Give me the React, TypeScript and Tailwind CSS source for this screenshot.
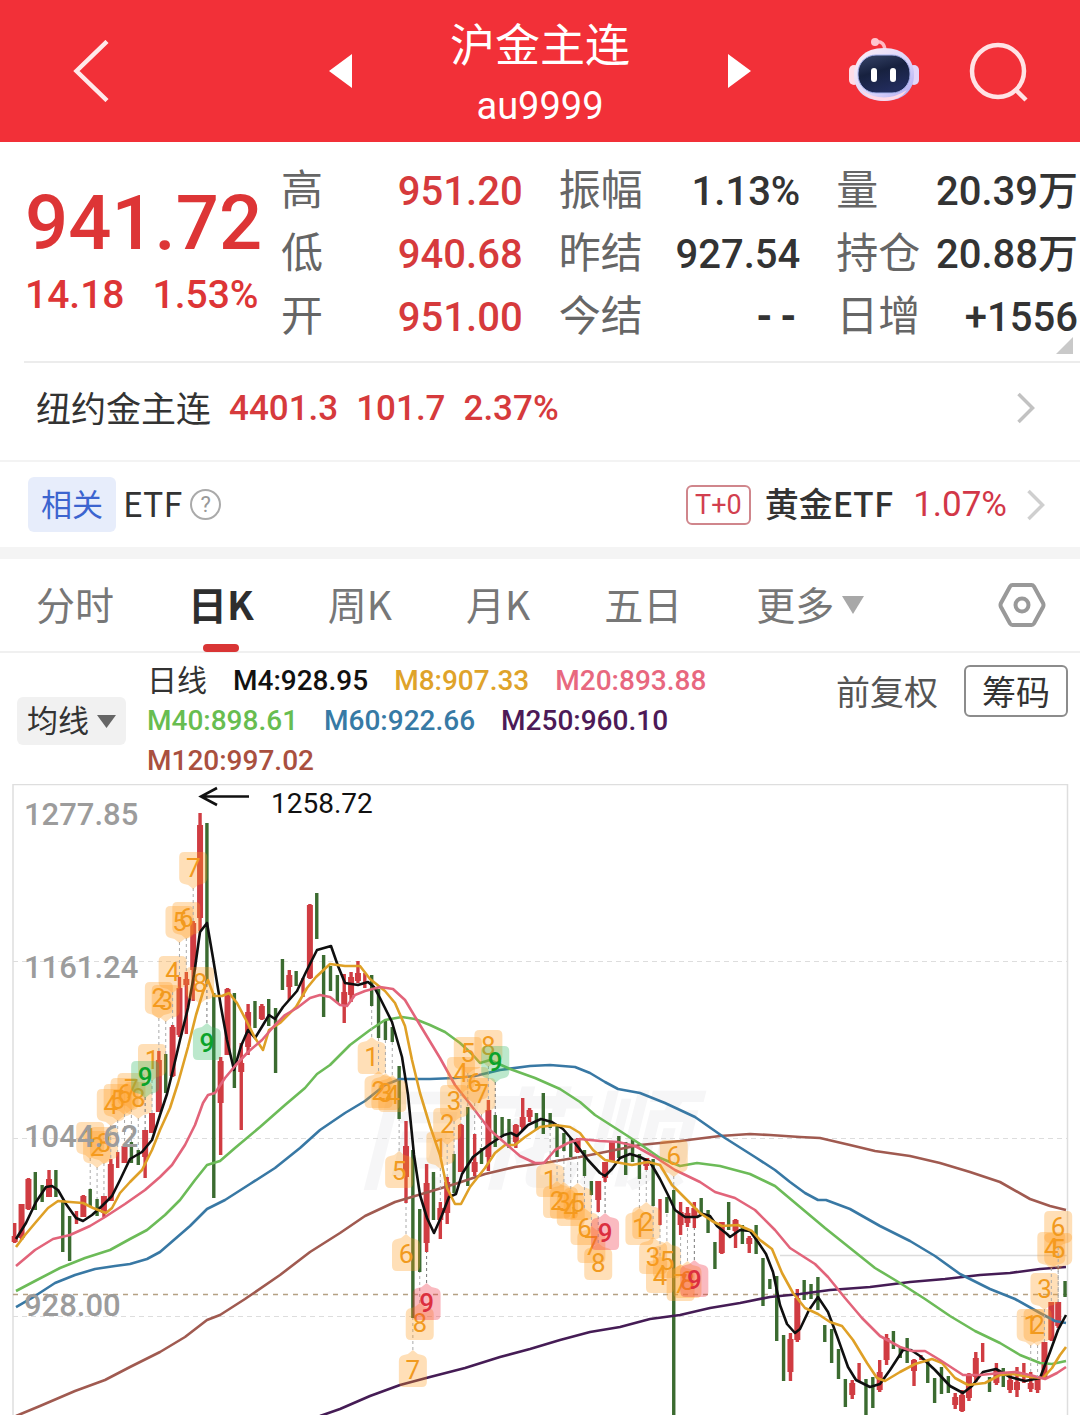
import React from "react";

const NUM = "font-['Roboto','Noto_Sans_CJK_SC',sans-serif]";

type Stat = { label: string; value: string; red?: boolean };

const stats: Stat[][] = [
  [
    { label: "高", value: "951.20", red: true },
    { label: "低", value: "940.68", red: true },
    { label: "开", value: "951.00", red: true },
  ],
  [
    { label: "振幅", value: "1.13%" },
    { label: "昨结", value: "927.54" },
    { label: "今结", value: "--" },
  ],
  [
    { label: "量", value: "20.39万" },
    { label: "持仓", value: "20.88万" },
    { label: "日增", value: "+1556" },
  ],
];

const averages = [
  { text: "日线", cls: "text-[30px] font-normal text-[#333]" },
  { text: "M4:928.95", cls: "text-[28px] font-medium text-[#111]" },
  { text: "M8:907.33", cls: "text-[28px] font-medium text-[#dfa32a]" },
  { text: "M20:893.88", cls: "text-[28px] font-medium text-[#e8687f]" },
  { text: "M40:898.61", cls: "text-[28px] font-medium text-[#68bd50]" },
  { text: "M60:922.66", cls: "text-[28px] font-medium text-[#377aa5]" },
  { text: "M250:960.10", cls: "text-[28px] font-medium text-[#4d1a57]" },
  { text: "M120:997.02", cls: "text-[28px] font-medium text-[#a9503f]" },
];

// [direction, high, low, body top, body bottom] in chart units; falling days are drawn as a thin bar.
type Candle = ["r" | "g", number, number, number?, number?];

const candles: Candle[] = [
  ["r", 1223, 1243, 1236, 1242], ["r", 1204, 1240, 1204, 1238], ["r", 1178, 1210, 1179, 1209], ["g", 1172, 1210], ["g", 1185, 1202],
  ["r", 1170, 1197, 1179, 1197], ["g", 1170, 1197], ["g", 1200, 1252], ["g", 1216, 1261], ["r", 1211, 1224],
  ["r", 1195, 1217, 1196, 1217], ["g", 1189, 1207], ["g", 1199, 1216], ["r", 1196, 1217, 1196, 1213], ["r", 1159, 1201, 1164, 1201],
  ["r", 1152, 1168], ["r", 1146, 1163, 1146, 1163], ["g", 1142, 1163], ["g", 1150, 1165], ["r", 1130, 1178, 1130, 1157],
  ["r", 1113, 1133, 1113, 1133], ["r", 1051, 1112, 1060, 1112], ["g", 1054, 1093], ["r", 1025, 1077, 1027, 1076], ["r", 977, 1037, 988, 1035],
  ["r", 972, 1034, 979, 985], ["r", 921, 1001, 923, 970], ["r", 813, 931, 825, 918], ["g", 823, 983], ["g", 993, 1198],
  ["r", 1057, 1155, 1061, 1103], ["r", 988, 1055, 989, 1055], ["g", 993, 1088], ["r", 1043, 1130, 1063, 1072], ["r", 1004, 1055, 1012, 1047],
  ["g", 1001, 1028], ["r", 1004, 1020, 1006, 1019], ["g", 999, 1026], ["g", 1008, 1073], ["g", 959, 990],
  ["r", 970, 1000, 975, 987], ["g", 971, 986], ["r", 978, 997], ["r", 904, 979, 905, 978], ["g", 893, 939],
  ["g", 955, 1017], ["g", 966, 991], ["g", 975, 1003], ["r", 974, 1023, 992, 1005], ["r", 972, 1002, 977, 995],
  ["r", 961, 983, 973, 981], ["r", 973, 988], ["g", 975, 1006], ["g", 989, 1038], ["g", 1020, 1040],
  ["g", 1027, 1042], ["g", 1066, 1119], ["r", 1121, 1203, 1146, 1177], ["g", 1150, 1318], ["g", 1209, 1272],
  ["r", 1164, 1252, 1183, 1243], ["g", 1172, 1220], ["r", 1202, 1239, 1208, 1220], ["r", 1177, 1224, 1182, 1213], ["g", 1154, 1193],
  ["r", 1124, 1172, 1125, 1172], ["g", 1107, 1186], ["r", 1134, 1176, 1162, 1172], ["g", 1148, 1164], ["r", 1100, 1171, 1110, 1157],
  ["g", 1115, 1147], ["g", 1117, 1137], ["g", 1119, 1148], ["r", 1124, 1148, 1125, 1142], ["r", 1098, 1130, 1117, 1127],
  ["r", 1108, 1122, 1110, 1117], ["g", 1113, 1130], ["g", 1093, 1134], ["g", 1113, 1128], ["g", 1124, 1157],
  ["g", 1133, 1151], ["g", 1138, 1157], ["r", 1138, 1153, 1139, 1152], ["g", 1150, 1176], ["g", 1181, 1195],
  ["r", 1181, 1212, 1181, 1200], ["r", 1162, 1182, 1162, 1178], ["r", 1142, 1162, 1142, 1161], ["g", 1136, 1158], ["g", 1142, 1175],
  ["g", 1139, 1162], ["g", 1154, 1179], ["r", 1158, 1170, 1158, 1166], ["g", 1159, 1206], ["r", 1199, 1225],
  ["g", 1197, 1213], ["g", 1190, 1416], ["r", 1202, 1235, 1212, 1225], ["r", 1207, 1227, 1213, 1223], ["r", 1202, 1228, 1208, 1218],
  ["g", 1198, 1215], ["g", 1210, 1233], ["g", 1242, 1269], ["r", 1222, 1254, 1222, 1253], ["g", 1202, 1230],
  ["r", 1219, 1248, 1220, 1231], ["g", 1225, 1244], ["r", 1236, 1253, 1238, 1244], ["g", 1225, 1254], ["g", 1258, 1306],
  ["g", 1279, 1289], ["g", 1276, 1341], ["g", 1335, 1381], ["r", 1333, 1381, 1339, 1372], ["r", 1289, 1342, 1298, 1340],
  ["g", 1280, 1300], ["g", 1284, 1299], ["g", 1277, 1310], ["g", 1325, 1342], ["g", 1329, 1363],
  ["g", 1349, 1379], ["g", 1379, 1407], ["r", 1380, 1399, 1383, 1395], ["r", 1363, 1382], ["g", 1379, 1416],
  ["g", 1377, 1408], ["r", 1360, 1392, 1372, 1390], ["r", 1334, 1365, 1338, 1360], ["g", 1331, 1349], ["g", 1347, 1358],
  ["g", 1338, 1363], ["r", 1359, 1386, 1360, 1371], ["r", 1355, 1360], ["g", 1360, 1383], ["g", 1378, 1403],
  ["g", 1367, 1394], ["g", 1376, 1393], ["r", 1393, 1409, 1397, 1405], ["r", 1390, 1412, 1395, 1411], ["r", 1373, 1401, 1374, 1398],
  ["r", 1352, 1382, 1358, 1377], ["r", 1343, 1362], ["g", 1377, 1392], ["r", 1363, 1385, 1370, 1383], ["g", 1368, 1387],
  ["r", 1375, 1393, 1380, 1390], ["r", 1367, 1397, 1382, 1390], ["r", 1363, 1383], ["r", 1372, 1392, 1383, 1389], ["r", 1377, 1393, 1378, 1390],
  ["r", 1342, 1379, 1342, 1378], ["r", 1302, 1341, 1302, 1340], ["r", 1302, 1328, 1302, 1326], ["g", 1281, 1297],
];

const candleX = (i: number) => 14.7 + 6.865 * i;

const lines = [
  {
    color: "#a05a50",
    points:
      "16,1416 40,1406 75,1391 105,1380 130,1367 160,1352 185,1337 207,1320 220,1315 245,1299 280,1275 310,1252 340,1233 365,1216 395,1202 425,1193 455,1184 485,1174 515,1167 550,1162 580,1157 610,1151 640,1145 680,1141 720,1136 750,1134 770,1135 800,1137 820,1138 850,1145 875,1151 910,1156 940,1163 970,1172 1000,1182 1030,1199 1050,1206 1066,1210",
  },
  {
    color: "#451c55",
    points:
      "320,1416 340,1409 370,1396 400,1385 430,1377 465,1368 500,1357 530,1349 560,1340 590,1332 620,1327 650,1319 680,1315 710,1308 740,1303 770,1297 800,1294 830,1290 870,1287 910,1282 945,1279 980,1275 1010,1273 1040,1269 1066,1267",
  },
  {
    color: "#3878a4",
    points:
      "16,1307 35,1296 55,1283 75,1275 95,1269 115,1266 130,1264 147,1259 160,1252 175,1239 190,1226 207,1209 225,1200 250,1184 275,1168 300,1148 320,1130 345,1113 365,1101 385,1085 400,1079 430,1079 455,1078 475,1076 500,1070 530,1066 550,1065 575,1067 590,1073 605,1082 618,1089 640,1093 665,1103 695,1117 725,1138 755,1157 775,1170 790,1182 805,1193 818,1200 826,1200 850,1209 880,1226 910,1241 935,1256 960,1274 990,1289 1015,1299 1040,1313 1055,1321 1066,1323",
  },
  {
    color: "#6cbb58",
    points:
      "16,1291 35,1281 60,1268 85,1258 110,1250 130,1239 147,1230 165,1215 180,1200 195,1180 207,1165 220,1161 235,1148 260,1127 285,1105 305,1088 317,1074 330,1065 350,1045 370,1030 385,1020 402,1017 415,1019 430,1025 445,1032 460,1043 472,1054 480,1063 490,1060 510,1069 535,1078 560,1089 580,1102 595,1115 620,1131 640,1144 660,1158 680,1166 697,1163 720,1166 750,1174 775,1186 800,1207 825,1228 850,1248 875,1268 900,1283 925,1299 950,1316 975,1331 1000,1343 1020,1355 1040,1363 1052,1364 1066,1361",
  },
  {
    color: "#0f0f0f",
    points:
      "16,1239 26,1223 36,1202 46,1187 52,1186 58,1190 66,1204 76,1218 83,1221 92,1215 102,1206 112,1196 120,1180 130,1159 142,1152 152,1140 160,1115 167,1094 173,1070 180,1040 188,1008 194,975 200,932 207,923 213,958 221,1007 227,1040 234,1070 241,1046 248,1030 255,1038 263,1025 269,1015 275,1019 283,1007 297,991 306,972 317,950 331,946 338,966 345,983 358,985 368,982 374,987 380,998 392,1022 402,1057 408,1095 414,1155 420,1195 427,1218 434,1233 442,1215 449,1197 456,1194 462,1174 473,1157 490,1144 504,1135 511,1133 517,1136 528,1125 541,1119 552,1122 563,1129 575,1143 588,1160 600,1173 605,1176 612,1169 620,1158 630,1154 640,1157 650,1162 660,1179 668,1195 675,1210 685,1217 697,1217 703,1214 710,1216 717,1226 727,1234 730,1237 740,1230 750,1231 758,1242 766,1254 773,1272 780,1305 787,1324 795,1333 800,1329 809,1310 818,1297 828,1312 837,1336 848,1367 856,1380 870,1387 880,1384 890,1370 903,1350 911,1350 920,1356 935,1370 950,1386 963,1393 972,1386 983,1372 996,1369 1010,1377 1025,1381 1040,1378 1050,1352 1058,1330 1066,1315",
  },
  {
    color: "#dfa026",
    points:
      "16,1247 25,1235 36,1222 48,1208 58,1201 70,1202 83,1203 93,1208 106,1213 112,1208 120,1193 130,1182 142,1170 152,1150 160,1130 170,1108 178,1083 188,1047 196,1015 203,992 208,980 214,996 222,996 229,993 237,1003 246,1020 255,1038 263,1050 269,1030 280,1023 296,1007 307,988 316,977 330,964 345,966 360,966 370,979 385,991 395,1003 405,1026 412,1060 420,1093 430,1126 440,1155 447,1188 455,1204 461,1204 470,1187 485,1168 495,1153 505,1145 515,1145 525,1137 540,1127 555,1125 570,1127 580,1133 593,1150 605,1160 615,1162 632,1165 648,1162 660,1165 672,1185 690,1203 700,1213 712,1221 722,1226 738,1225 752,1231 760,1240 772,1249 782,1273 793,1293 805,1308 818,1314 830,1322 842,1326 853,1340 867,1363 877,1378 885,1381 900,1372 915,1364 932,1359 942,1363 955,1378 968,1385 985,1383 1000,1375 1012,1374 1030,1377 1043,1378 1052,1368 1060,1355 1066,1347",
  },
  {
    color: "#e2647a",
    points:
      "16,1266 35,1250 53,1239 70,1235 90,1226 105,1217 125,1204 145,1190 160,1177 172,1165 185,1145 195,1125 203,1103 208,1095 215,1093 225,1078 235,1066 248,1052 262,1040 275,1025 285,1015 297,1008 310,998 320,995 330,997 340,1005 347,1006 355,995 365,991 380,987 393,989 405,1000 420,1025 440,1058 455,1085 470,1104 490,1130 505,1143 520,1156 535,1163 544,1163 555,1150 568,1143 580,1139 600,1141 618,1142 635,1146 655,1157 675,1170 700,1182 715,1192 735,1198 755,1210 775,1230 790,1248 815,1264 828,1277 845,1298 862,1318 880,1336 900,1347 912,1351 925,1351 940,1360 963,1375 980,1375 1000,1373 1015,1372 1030,1375 1045,1379 1057,1373 1066,1367",
  },
];

// [candle index, digit, vertical centre, side of the candle, tone]
type Mark = [number, string, number, "above" | "below", ("green" | "red")?];

const marks: Mark[] = [
  [11, "1", 1138, "above"], [12, "2", 1147, "above"], [13, "3", 1143, "above"],
  [14, "4", 1105, "above"], [15, "5", 1100, "above"], [16, "6", 1094, "above"], [17, "7", 1089, "above"], [18, "8", 1098, "above"],
  [20, "1", 1060, "above"], [19, "9", 1077, "above", "green"],
  [21, "2", 998, "above"], [22, "3", 1001, "above"], [23, "4", 972, "above"], [24, "5", 922, "above"], [25, "6", 918, "above"],
  [26, "7", 868, "above"], [27, "8", 983, "above"], [28, "9", 1043, "below", "green"],
  [52, "1", 1057, "below"], [53, "2", 1091, "below"], [54, "3", 1093, "below"], [55, "4", 1095, "below"],
  [56, "5", 1171, "below"], [57, "6", 1254, "below"], [58, "7", 1370, "below"], [59, "8", 1323, "below"], [60, "9", 1303, "below", "red"],
  [62, "1", 1148, "above"], [63, "2", 1124, "above"], [64, "3", 1101, "above"], [65, "4", 1073, "above"], [66, "5", 1053, "above"],
  [67, "6", 1083, "above"], [68, "7", 1094, "above"], [69, "8", 1046, "above"], [70, "9", 1062, "above", "green"],
  [78, "1", 1180, "below"], [79, "2", 1201, "below"], [80, "3", 1202, "below"], [81, "4", 1209, "below"], [82, "5", 1203, "below"],
  [83, "6", 1228, "below"], [84, "7", 1246, "below"], [85, "8", 1263, "below"], [86, "9", 1233, "below", "red"],
  [91, "1", 1228, "below"], [92, "2", 1222, "below"], [93, "3", 1257, "below"], [94, "4", 1276, "below"], [95, "5", 1261, "below"],
  [96, "6", 1156, "above"], [97, "7", 1284, "below"], [98, "8", 1281, "below"], [99, "9", 1280, "below", "red"],
  [148, "1", 1325, "above"], [149, "2", 1325, "above"], [150, "3", 1289, "above"], [151, "4", 1248, "above"], [152, "5", 1249, "above"],
  [152, "6", 1227, "above"],
];

const tones = {
  orange: { box: "#ff9d1e", ink: "#f19a1e" },
  green: { box: "#2fb861", ink: "#0ba32a" },
  red: { box: "#f0283c", ink: "#dc2f3f" },
};

function MarkBox({ mark }: { mark: Mark }) {
  const [i, digit, y, side, toneName] = mark;
  const x = candleX(i);
  const tone = tones[toneName ?? "orange"];
  const above = side === "above";
  const edge = above ? candles[i][1] : candles[i][2];
  const tip = above ? y + 20 : y - 20;
  const connected = above ? edge > tip : edge < tip;
  const shape = above
    ? "M-9 -16h18q5 0 5 5v21q0 5 -5 6l-4 1l-5 4l-5 -4l-4 -1q-5 -1 -5 -6v-21q0 -5 5 -5z"
    : "M-9 17h18q5 0 5 -5v-21q0 -5 -5 -6l-4 -1l-5 -4l-5 4l-4 1q-5 1 -5 6v21q0 5 5 5z";
  return (
    <g>
      {connected && (
        <line x1={x} x2={x} y1={tip} y2={edge} stroke={toneName ? "#777" : "#aaa"} strokeWidth="1" strokeDasharray="3 3" />
      )}
      <g transform={`translate(${x} ${y})`}>
        <path d={shape} fill={tone.box} fillOpacity="0.32" />
        <text x="0" y="9" textAnchor="middle" fontSize="26" fill={tone.ink} fontWeight={toneName ? 500 : 400}>
          {digit}
        </text>
      </g>
    </g>
  );
}

function Chart() {
  return (
    <svg viewBox="0 784 1080 631" className={`block w-full ${NUM}`} role="img" aria-label="日K线图">
      <text x="358" y="1180" fontSize="110" fontWeight="700" fontStyle="italic" fill="#f6f6f7" fontFamily="Noto Sans CJK SC">
        同花顺
      </text>
      <g fill="none">
        <path d="M13 1415V784.5H1067.500V1415" stroke="#dedede" strokeWidth="1.500" />
        <path d="M13 961.500H1067M13 1138.500H1067M13 1316.500H1067" stroke="#dddddd" strokeDasharray="5 4" />
        <path d="M780 1255.500H1067" stroke="#dcdcdc" strokeWidth="1.500" />
        <path d="M13 1294.500H1067" stroke="#b5a184" strokeWidth="1.500" strokeDasharray="5 5" />
      </g>
      {candles.map(([dir, high, low, top, bottom], i) => {
        const x = candleX(i);
        const fill = dir === "r" ? "#d03c42" : "#3b6b30";
        return (
          <g key={i} fill={fill}>
            <rect x={x - 1.7} y={high} width="3.4" height={low - high} />
            {top !== undefined && bottom !== undefined && <rect x={x - 3} y={top} width="6" height={bottom - top} />}
          </g>
        );
      })}
      {lines.map((line) => (
        <polyline key={line.color} points={line.points} fill="none" stroke={line.color} strokeWidth="2.600" strokeLinejoin="round" />
      ))}
      {marks.map((mark, k) => (
        <MarkBox key={k} mark={mark} />
      ))}
      <g fontSize="31" fontWeight="500" fill="#9c9c9c">
        <text x="24" y="825">1277.85</text>
        <text x="24" y="978">1161.24</text>
        <text x="24" y="1147">1044.62</text>
        <text x="24" y="1316">928.00</text>
      </g>
      <path d="M249 796.500H202M217 788L201 796.500L217 805" fill="none" stroke="#111" strokeWidth="2.600" />
      <text x="271" y="813" fontSize="28" fill="#111">1258.72</text>
    </svg>
  );
}

function Robot() {
  return (
    <svg viewBox="0 0 72 66" className="h-[66px] w-[72px]" aria-hidden="true">
      <defs>
        <linearGradient id="shell" x1="0" y1="0" x2="1" y2="1">
          <stop offset="0" stopColor="#fff0f6" />
          <stop offset="0.6" stopColor="#d9d3fa" />
          <stop offset="1" stopColor="#a9a5f0" />
        </linearGradient>
        <linearGradient id="visor" x1="0" y1="0" x2="0.4" y2="1">
          <stop offset="0" stopColor="#39466b" />
          <stop offset="0.5" stopColor="#17213f" />
          <stop offset="1" stopColor="#222c5c" />
        </linearGradient>
      </defs>
      <path d="M27 4q10-2 10 10" fill="none" stroke="#ffb9c4" strokeWidth="3.500" />
      <circle cx="27" cy="4" r="4" fill="#ffc6cf" />
      <rect x="1" y="27" width="10" height="20" rx="5" fill="#ffdce6" />
      <rect x="61" y="27" width="10" height="20" rx="5" fill="#e2d6fa" />
      <path d="M36 10C56 10 66 22 66 37C66 54 53 63 36 63C19 63 6 54 6 37C6 22 16 10 36 10z" fill="url(#shell)" />
      <path d="M13 52q23 15 46 0q-7 11 -23 11t-23 -11z" fill="#ffd9e6" />
      <rect x="10" y="17" width="52" height="38" rx="18" fill="url(#visor)" stroke="#a9b4ee" strokeWidth="1" />
      <rect x="23" y="30" width="6" height="14" rx="3" fill="#fff" />
      <rect x="42" y="30" width="6" height="14" rx="3" fill="#fff" />
    </svg>
  );
}

function Chevron({ className }: { className: string }) {
  return (
    <svg viewBox="0 0 18 32" className={`h-8 w-[18px] ${className}`} fill="none" stroke="currentColor" aria-hidden="true">
      <path d="M1.500 2L15.500 16L1.500 30" strokeWidth="3.500" />
    </svg>
  );
}

export default function App() {
  return (
    <div className="min-h-screen overflow-hidden bg-white font-['Noto_Sans_CJK_SC',sans-serif] text-[#333]">
      <header className="grid h-[142px] grid-cols-[1fr_422px_1fr] items-center bg-[#f23038] text-white">
        <div className="pl-[73px]">
          <button aria-label="返回" className="block">
            <svg viewBox="0 0 36 62" className="h-[62px] w-9" fill="none" stroke="#ffe9ea" strokeWidth="4.500" aria-hidden="true">
              <path d="M34 1.500L3.500 31L34 60.500" />
            </svg>
          </button>
        </div>
        <div className="flex items-center justify-between">
          <button aria-label="上一个">
            <svg viewBox="0 0 23 34" className="h-[34px] w-[23px]" fill="#fff" aria-hidden="true">
              <path d="M23 0V34L0 17z" />
            </svg>
          </button>
          <div className="flex flex-col items-center pt-2">
            <h1 className="text-[45px] leading-[62px] font-normal">沪金主连</h1>
            <p className={`text-[38px] leading-[64px] ${NUM}`}>au9999</p>
          </div>
          <button aria-label="下一个">
            <svg viewBox="0 0 23 34" className="h-[34px] w-[23px]" fill="#fff" aria-hidden="true">
              <path d="M0 0V34L23 17z" />
            </svg>
          </button>
        </div>
        <div className="flex items-center justify-end gap-12 pr-[50px]">
          <button aria-label="智能助手">
            <Robot />
          </button>
          <button aria-label="搜索">
            <svg viewBox="0 0 62 62" className="h-[62px] w-[62px]" fill="none" stroke="#ffe3e5" strokeWidth="4.500" aria-hidden="true">
              <circle cx="30" cy="31" r="26" />
              <path d="M47 49L58 60" />
            </svg>
          </button>
        </div>
      </header>

      <section className="relative flex h-[219px] pt-[18px]">
        <div className={`w-[281px] shrink-0 pl-[25px] font-medium text-[#dd3536] ${NUM}`}>
          <p className="pt-[18px] text-[76px] leading-[90px]">941.72</p>
          <p className="flex gap-7 text-[39px] leading-[54px]">
            <span>14.18</span>
            <span>1.53%</span>
          </p>
        </div>
        <div className="grid flex-1 grid-cols-3 gap-9 pr-0.5">
          {stats.map((column, c) => (
            <dl key={c}>
              {column.map((s) => (
                <div key={s.label} className="flex h-[63px] items-center justify-between whitespace-nowrap">
                  <dt className="pb-[10px] text-[42px] leading-none text-[#666]">{s.label}</dt>
                  <dd
                    className={`text-[40px] leading-[63px] ${s.red ? "text-[#d63a3c]" : "text-[#333]"} ${
                      s.value === "--" ? "font-['Liberation_Mono',monospace] font-bold" : `font-medium ${NUM}`
                    }`}
                  >
                    {s.value}
                  </dd>
                </div>
              ))}
            </dl>
          ))}
        </div>
        <svg viewBox="0 0 17 17" className="absolute right-[7px] bottom-[7px] h-[17px] w-[17px]" fill="#c9c9c9" aria-hidden="true">
          <path d="M17 0V17H0z" />
        </svg>
      </section>

      <a href="#comex" className="ml-6 flex h-[99px] items-center border-t-2 border-[#ececec] pr-[45px] pb-[7px] pl-3">
        <span className="pb-[3px] text-[35px] leading-none">纽约金主连</span>
        <span className={`ml-[18px] flex flex-1 gap-[18px] text-[35px] leading-none font-medium text-[#d63a3c] ${NUM}`}>
          <span>4401.3</span>
          <span>101.7</span>
          <span>2.37%</span>
        </span>
        <Chevron className="text-[#c2c2c2]" />
      </a>

      <section className="flex h-[87px] items-center justify-between border-t-2 border-[#f3f3f3] pr-[35px] pl-7">
        <div className="flex items-center">
          <span className="rounded-md bg-[#e7edfb] px-[13px] pb-1 text-[31px] leading-[51px] text-[#3c64cf]">相关</span>
          <span className="ml-[7px] pb-1 text-[34px] leading-none">ETF</span>
          <button
            aria-label="说明"
            className={`ml-2 flex h-[31px] w-[31px] items-center justify-center rounded-full border-2 border-[#aaa] text-[22px] leading-none text-[#999] ${NUM}`}
          >
            ?
          </button>
        </div>
        <a href="#etf" className="flex items-center">
          <span className={`rounded-md border-2 border-[#d0868c] px-[7px] text-[27px] leading-9 text-[#d23f4f] ${NUM}`}>T+0</span>
          <span className="ml-[14px] pb-1 text-[34px] leading-none font-medium">黄金ETF</span>
          <span className={`mr-5 ml-5 text-[35px] leading-none text-[#d23748] ${NUM}`}>1.07%</span>
          <Chevron className="text-[#cfcfcf]" />
        </a>
      </section>

      <div className="h-3 bg-[#f4f4f4]" />

      <nav className="flex h-[94px] items-center justify-between border-b-2 border-[#f0f0f0] pr-[34px] pl-9 text-[39px] text-[#777]">
        <div className="flex h-full items-center gap-[74px]">
          <button className="pb-1">分时</button>
          <button aria-current="page" className="relative pb-1 font-bold text-[#2e2e2e]">
            日K
            <span className="absolute -bottom-4 left-1/2 h-2 w-9 -translate-x-1/2 rounded-full bg-[#d93535]" />
          </button>
          <button className="pb-1">周K</button>
          <button className="pb-1">月K</button>
          <button className="pb-1">五日</button>
          <button className="flex items-center gap-2">
            <span className="pb-1">更多</span>
            <svg viewBox="0 0 22 18" className="h-[18px] w-[22px]" fill="#a8a8a8" aria-hidden="true">
              <path d="M0 0H22L11 18z" />
            </svg>
          </button>
        </div>
        <button aria-label="设置">
          <svg viewBox="0 0 48 46" className="h-[46px] w-12" fill="none" stroke="#999" strokeWidth="4" aria-hidden="true">
            <path d="M14.500 3H33.500Q35 3 36 4.500L45 21Q46 23 45 25L36 41.500Q35 43 33.500 43H14.500Q13 43 12 41.500L3 25Q2 23 3 21L12 4.500Q13 3 14.500 3z" />
            <circle cx="24" cy="23" r="6.500" />
          </svg>
        </button>
      </nav>

      <section className="flex min-h-[131px] items-start pt-2 pr-3 pl-[17px]">
        <button className="mt-9 flex h-12 shrink-0 items-center gap-2 rounded-md bg-[#f1f1f1] px-[10px] text-[31px] leading-none">
          <span className="pb-[5px]">均线</span>
          <svg viewBox="0 0 19 13" className="h-[13px] w-[19px]" fill="#666" aria-hidden="true">
            <path d="M0 0H19L9.500 13z" />
          </svg>
        </button>
        <ul className={`ml-[21px] flex flex-1 flex-wrap gap-x-[26px] leading-10 ${NUM}`}>
          {averages.map((a) => (
            <li key={a.text} className={a.cls}>
              {a.text}
            </li>
          ))}
        </ul>
        <div className="mt-1 flex shrink-0 items-center gap-[26px] text-[34px] text-[#555]">
          <button className="leading-[52px]">前复权</button>
          <button className="rounded-md border-2 border-[#8c8c8c] px-4 leading-[48px] text-[#333]">筹码</button>
        </div>
      </section>

      <Chart />
    </div>
  );
}
